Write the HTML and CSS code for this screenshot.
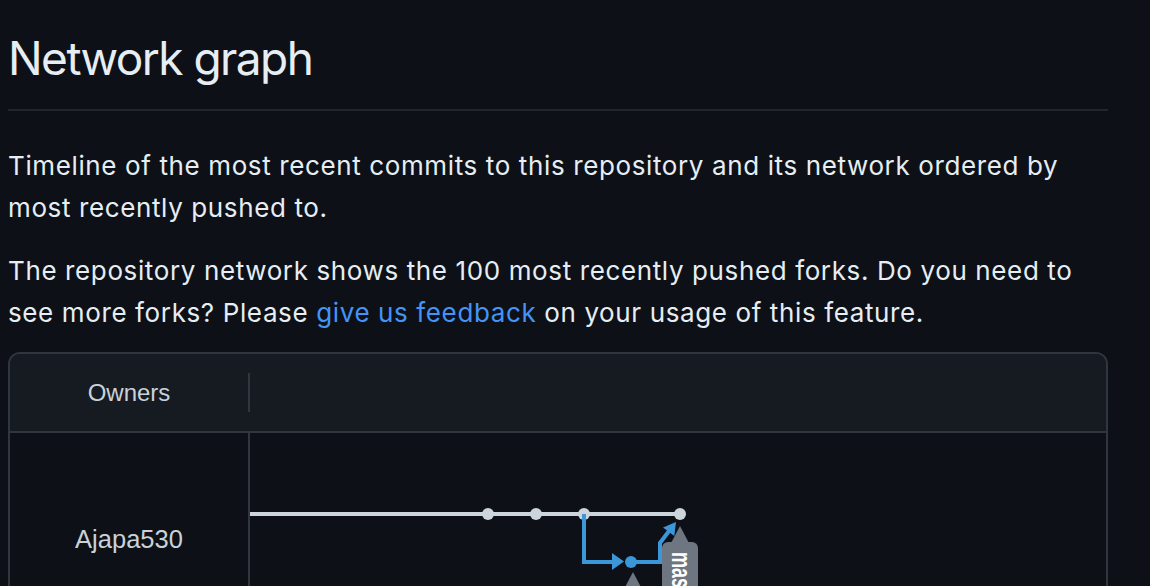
FILE: index.html
```html
<!DOCTYPE html>
<html lang="en">
<head>
<meta charset="utf-8">
<title>Network graph</title>
<link rel="stylesheet" href="styles.css">
</head>
<body>
<div class="page">
  <h1 class="subhead">Network graph</h1>
  <p class="lead">Timeline of the most recent commits to this repository and its network ordered by most recently pushed to.</p>
  <p class="note">The repository network shows the 100 most recently pushed forks. Do you need to see more forks? Please <a href="#" class="link">give us feedback</a> on your usage of this feature.</p>
  <div class="network">
    <div class="net-head">
      <div class="owners-h">Owners</div>
      <div class="graph-h"></div>
    </div>
    <div class="net-body">
      <div class="owners">
        <div class="owner">Ajapa530</div>
      </div>
      <div class="graph">
        <svg class="graph-svg" width="856" height="240" viewBox="0 0 856 240" xmlns="http://www.w3.org/2000/svg">
          <line x1="0" y1="81" x2="430" y2="81" stroke="#cdd5dc" stroke-width="4"/>
          <circle cx="238" cy="81" r="6" fill="#cdd5dc"/>
          <circle cx="286" cy="81" r="6" fill="#cdd5dc"/>
          <circle cx="334" cy="81" r="6" fill="#cdd5dc"/>
          <circle cx="430" cy="81" r="6" fill="#cdd5dc"/>
          <path d="M334 81 V129 H363" fill="none" stroke="#3b97d8" stroke-width="4"/>
          <polygon points="362,120 374,128.5 362,137" fill="#3b97d8"/>
          <circle cx="381" cy="129" r="6" fill="#3b97d8"/>
          <path d="M381 129 H410 V110 L419 98" fill="none" stroke="#3b97d8" stroke-width="4" stroke-linejoin="miter"/>
          <polygon points="426,89 424.3,103 413,94.5" fill="#3b97d8"/>
          <polygon points="430,93 420,112 440,112" fill="#6e7681"/>
          <rect x="412" y="109" width="36" height="140" rx="6" fill="#6e7681"/>
          <text class="tag-text" transform="translate(422,119) rotate(90) scale(1,1.55)">master</text>
          <polygon points="383,139 373,158 393,158" fill="#6e7681"/>
          <rect x="365" y="155" width="36" height="120" rx="6" fill="#6e7681"/>
        </svg>
      </div>
    </div>
  </div>
</div>
</body>
</html>
```

FILE: styles.css
```css
body {
  margin: 0;
  background: #0d1117;
  color: #e6edf3;
  font-family: Inter, "Noto Sans", sans-serif;
}

.page {
  width: 1100px;
  padding-left: 8px;
}

.subhead {
  margin: 0;
  padding-top: 28px;
  padding-bottom: 21px;
  border-bottom: 2px solid #21262d;
  font-size: 46px;
  font-weight: 400;
  line-height: 60px;
  letter-spacing: -1.55px;
}

.lead,
.note {
  font-size: 26px;
  line-height: 42px;
  letter-spacing: 0.62px;
  margin: 0;
}

.lead {
  margin-top: 34px;
  margin-bottom: 21px;
}

.note {
  margin-bottom: 18px;
}

.link {
  color: #4493f8;
  text-decoration: none;
}

.network {
  border: 2px solid #30363d;
  border-radius: 12px;
  overflow: hidden;
  font-family: "Liberation Sans", Arial, sans-serif;
}

.net-head {
  display: flex;
  align-items: center;
  height: 77px;
  background: #161b22;
  border-bottom: 2px solid #30363d;
}

.owners-h {
  width: 238px;
  text-align: center;
  font-size: 24px;
  color: #c9d1d9;
}

.graph-h {
  height: 39px;
  border-left: 2px solid #30363d;
}

.net-body {
  display: flex;
  height: 240px;
}

.owners {
  width: 238px;
  border-right: 2px solid #30363d;
}

.owner {
  height: 213px;
  display: flex;
  align-items: center;
  justify-content: center;
  font-size: 25.5px;
  color: #c9d1d9;
}

.graph {
  flex: 1;
  overflow: hidden;
}

.graph-svg {
  display: block;
}

.tag-text {
  font-family: "Liberation Sans", Arial, sans-serif;
  font-weight: 700;
  font-size: 18px;
  fill: #ffffff;
}
```
